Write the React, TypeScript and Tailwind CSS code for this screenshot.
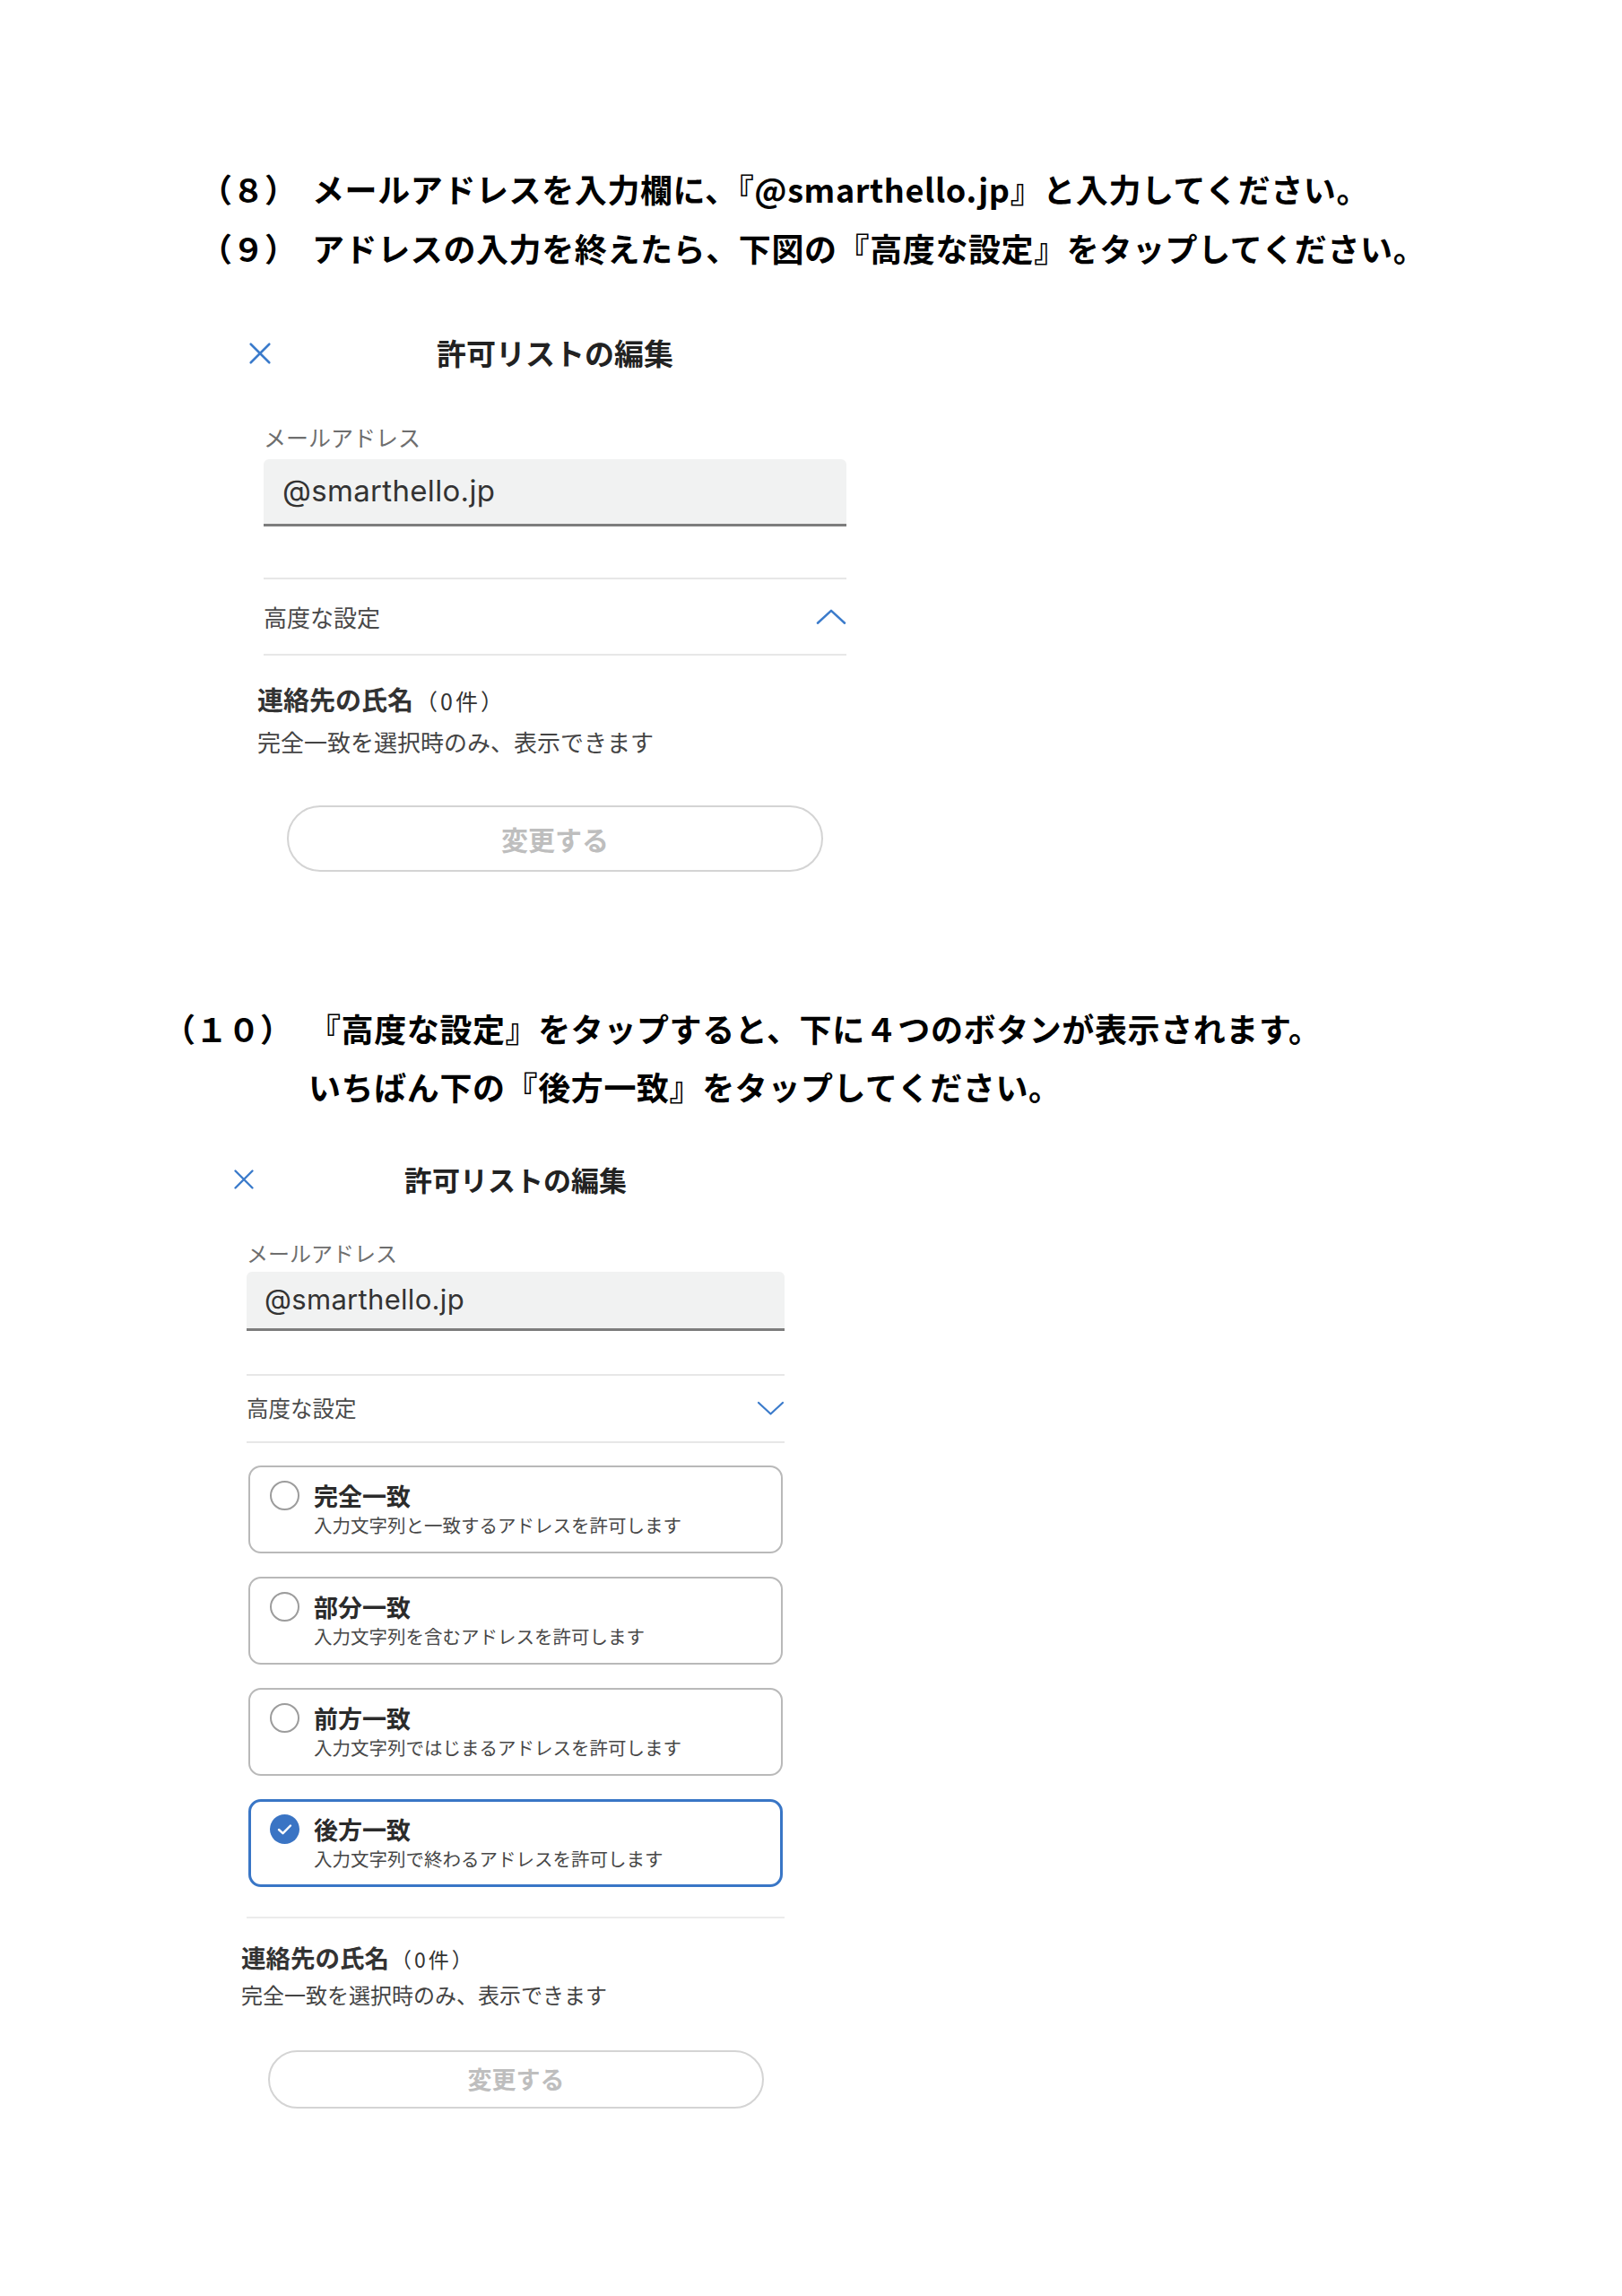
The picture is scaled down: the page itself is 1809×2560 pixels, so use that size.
import React from "react";

const JP = "font-['Noto_Sans_CJK_JP','Noto_Sans',sans-serif]";
const LATIN = "font-['Inter','Noto_Sans_CJK_JP',sans-serif]";

function CloseIcon({ size }: { size: number }) {
  return (
    <svg
      width={size}
      height={size}
      viewBox="0 0 24 24"
      fill="none"
      stroke="#3b7bcb"
      strokeWidth={2.4}
      strokeLinecap="round"
    >
      <path d="M2.5 2.5L21.5 21.5M21.5 2.5L2.5 21.5" />
    </svg>
  );
}

function Chevron({ up, width }: { up?: boolean; width: number }) {
  return (
    <svg
      width={width}
      height={Math.round(width * 0.56)}
      viewBox="0 0 30 17"
      fill="none"
      stroke="#3b7bcb"
      strokeWidth={2.2}
      strokeLinecap="round"
      strokeLinejoin="round"
    >
      <path d={up ? "M1.5 15L15 2.5L28.5 15" : "M1.5 2L15 14.5L28.5 2"} />
    </svg>
  );
}

function CheckedRadio() {
  return (
    <svg width="33" height="33" viewBox="0 0 33 33">
      <circle cx="16.5" cy="16.5" r="16.5" fill="#3a74c4" />
      <path
        d="M10 17L14.5 21.2L23 12.5"
        fill="none"
        stroke="#fff"
        strokeWidth={2.4}
        strokeLinecap="round"
        strokeLinejoin="round"
      />
    </svg>
  );
}

type MatchOption = {
  title: string;
  desc: string;
  selected?: boolean;
};

const options: MatchOption[] = [
  { title: "完全一致", desc: "入力文字列と一致するアドレスを許可します" },
  { title: "部分一致", desc: "入力文字列を含むアドレスを許可します" },
  { title: "前方一致", desc: "入力文字列ではじまるアドレスを許可します" },
  {
    title: "後方一致",
    desc: "入力文字列で終わるアドレスを許可します",
    selected: true,
  },
];

function OptionCard({ option }: { option: MatchOption }) {
  return (
    <div
      className={
        option.selected
          ? "flex h-[98px] rounded-[14px] border-[3px] border-[#3976c6] pl-[21px] pt-[14px]"
          : "flex h-[98px] rounded-[14px] border-2 border-[#b9b9b9] pl-[22px] pt-[15px]"
      }
    >
      <div className="flex h-[33px] w-[33px] shrink-0 items-center justify-center">
        {option.selected ? (
          <CheckedRadio />
        ) : (
          <span className="h-[33px] w-[33px] rounded-full border-[2.5px] border-[#9c9c9c]" />
        )}
      </div>
      <div className="ml-[16px]">
        <p className="text-[27px] font-bold leading-[33px] text-[#2b2b2b]">
          {option.title}
        </p>
        <p className="mt-[4px] text-[20.5px] leading-[24px] text-[#474747]">
          {option.desc}
        </p>
      </div>
    </div>
  );
}

function FirstPanel() {
  return (
    <section className="ml-[294px] mt-[60px] w-[650px]">
      <div className="grid h-[50px] grid-cols-[1fr_auto_1fr] items-center">
        <div className="-ml-[17px] flex">
          <CloseIcon size={26} />
        </div>
        <h2 className="text-[33px] font-bold text-[#222]">許可リストの編集</h2>
        <div />
      </div>
      <p className="mt-[53px] text-[25px] leading-[30px] text-[#6e6e6e]">
        メールアドレス
      </p>
      <div
        className={`mt-[10px] flex h-[75px] items-center rounded-t-[6px] border-b-[3px] border-[#7d7d7d] bg-[#f1f2f2] pl-[21px] text-[33px] tracking-[0.01em] text-[#333] ${LATIN}`}
      >
        @smarthello.jp
      </div>
      <div className="mt-[57px] h-[2px] bg-[#e7e7e7]" />
      <div className="flex h-[83px] items-center justify-between">
        <span className="text-[26px] text-[#4a4a4a]">高度な設定</span>
        <Chevron up width={34} />
      </div>
      <div className="h-[2px] bg-[#e7e7e7]" />
      <div className="-ml-[7px] mt-[30px]">
        <p className="text-[29px] font-bold leading-[36px] text-[#333]">
          連絡先の氏名
          <span className="ml-[2px] text-[25px] font-normal leading-none tracking-[3px]">
            （0件）
          </span>
        </p>
        <p className="mt-[15px] text-[26px] leading-[30px] text-[#444]">
          完全一致を選択時のみ、表示できます
        </p>
      </div>
      <div className="mx-[26px] mt-[56px] flex h-[74px] items-center justify-center rounded-full border-2 border-[#d4d4d4] text-[30px] font-bold text-[#bebebe]">
        変更する
      </div>
    </section>
  );
}

function SecondPanel() {
  return (
    <section className="ml-[275px] mt-[48px] w-[600px]">
      <div className="grid h-[46px] grid-cols-[1fr_auto_1fr] items-center">
        <div className="-ml-[15px] flex">
          <CloseIcon size={24} />
        </div>
        <h2 className="text-[31px] font-bold text-[#222]">許可リストの編集</h2>
        <div />
      </div>
      <p className="mt-[45px] text-[24px] leading-[28px] text-[#6e6e6e]">
        メールアドレス
      </p>
      <div
        className={`mt-[7px] flex h-[66px] items-center rounded-t-[6px] border-b-[3px] border-[#7d7d7d] bg-[#f1f2f2] pl-[20px] text-[31px] tracking-[0.01em] text-[#333] ${LATIN}`}
      >
        @smarthello.jp
      </div>
      <div className="mt-[48px] h-[2px] bg-[#e7e7e7]" />
      <div className="flex h-[73px] items-center justify-between">
        <span className="text-[24.5px] text-[#4a4a4a]">高度な設定</span>
        <Chevron width={31} />
      </div>
      <div className="h-[2px] bg-[#e7e7e7]" />
      <div className="mx-[2px] mt-[25px] flex flex-col gap-[26px]">
        {options.map((option) => (
          <OptionCard key={option.title} option={option} />
        ))}
      </div>
      <div className="mt-[33px] h-[2px] bg-[#ececec]" />
      <div className="-ml-[6px] mt-[26px]">
        <p className="text-[27.5px] font-bold leading-[34px] text-[#333]">
          連絡先の氏名
          <span className="ml-[2px] text-[23px] font-normal leading-none tracking-[3px]">
            （0件）
          </span>
        </p>
        <p className="mt-[11px] text-[24px] leading-[28px] text-[#444]">
          完全一致を選択時のみ、表示できます
        </p>
      </div>
      <div className="ml-[24px] mr-[23px] mt-[48px] flex h-[65px] items-center justify-center rounded-full border-2 border-[#d4d4d4] text-[27px] font-bold text-[#bebebe]">
        変更する
      </div>
    </section>
  );
}

export default function App() {
  return (
    <div className={`min-h-[2560px] w-[1809px] bg-white ${JP}`}>
      <div className="pl-[223px] pt-[177px] text-[36px] font-bold leading-[66px] tracking-[0.6px] text-black">
        <p className="flex">
          <span className="inline-block w-[125px] shrink-0 tracking-normal">（８）</span>
          <span>メールアドレスを入力欄に、『@smarthello.jp』と入力してください。</span>
        </p>
        <p className="flex">
          <span className="inline-block w-[125px] shrink-0 tracking-normal">（９）</span>
          <span>アドレスの入力を終えたら、下図の『高度な設定』をタップしてください。</span>
        </p>
      </div>

      <FirstPanel />

      <div className="mt-[142px] pl-[182px] text-[36px] font-bold leading-[65px] tracking-[0.6px] text-black">
        <p className="flex">
          <span className="inline-block w-[162px] shrink-0 tracking-normal">（１０）</span>
          <span>『高度な設定』をタップすると、下に４つのボタンが表示されます。</span>
        </p>
        <p className="pl-[162px]">いちばん下の『後方一致』をタップしてください。</p>
      </div>

      <SecondPanel />
    </div>
  );
}
